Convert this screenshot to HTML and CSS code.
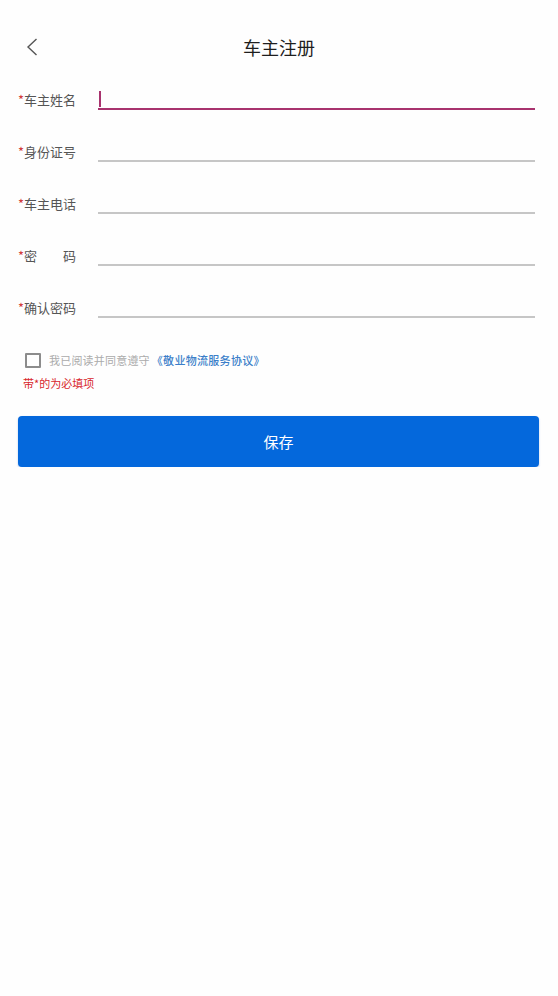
FILE: index.html
```html
<!DOCTYPE html>
<html lang="zh-CN">
<head>
<meta charset="utf-8">
<title>车主注册</title>
<link rel="stylesheet" href="styles.css">
</head>
<body>
<div class="header">
  <div class="back">
    <svg width="12" height="18" viewBox="0 0 12 18"><path d="M10.5 1 L2 9 L10.5 17" fill="none" stroke="#555" stroke-width="1.4"/></svg>
  </div>
  <div class="title">车主注册</div>
  <div></div>
</div>
<div class="form">
  <div class="row">
    <div class="label"><span class="star">*</span>车主姓名</div>
    <div class="field focus"><span class="caret"></span></div>
  </div>
  <div class="row">
    <div class="label"><span class="star">*</span>身份证号</div>
    <div class="field"></div>
  </div>
  <div class="row">
    <div class="label"><span class="star">*</span>车主电话</div>
    <div class="field"></div>
  </div>
  <div class="row">
    <div class="label"><span class="star">*</span>密&emsp;&emsp;码</div>
    <div class="field"></div>
  </div>
  <div class="row">
    <div class="label"><span class="star">*</span>确认密码</div>
    <div class="field"></div>
  </div>
</div>
<div class="agree">
  <span class="box"></span>
  <span class="agree-text">我已阅读并同意遵守</span><span class="link">《敬业物流服务协议》</span>
</div>
<div class="note">带*的为必填项</div>
<div class="btn">保存</div>
</body>
</html>
```
FILE: styles.css
```css
* { box-sizing: border-box; }
body {
  margin: 0;
  background: #fefefe;
  font-family: "Noto Sans CJK SC", "Noto Sans", sans-serif;
  color: #333;
}
.header {
  margin-top: 28px;
  height: 38px;
  display: grid;
  grid-template-columns: 1fr auto 1fr;
  align-items: center;
}
.back {
  padding-left: 26px;
  display: flex;
  align-items: center;
  height: 38px;
}
.title {
  font-size: 18px;
  color: #1e1e1e;
  font-weight: 400;
}
.form {
  padding: 24px 23px 0 18px;
  display: flex;
  flex-direction: column;
  gap: 32px;
}
.row {
  display: flex;
  align-items: center;
  height: 20px;
}
.label {
  width: 80px;
  font-size: 13px;
  line-height: 20px;
  color: #555;
  white-space: nowrap;
}
.star { color: #d23a3a; }
.field {
  flex: 1;
  height: 20px;
  border-bottom: 2px solid #c6c6c6;
  position: relative;
}
.field.focus { border-bottom-color: #a8336e; }
.caret {
  position: absolute;
  left: 1px;
  top: 1px;
  width: 2px;
  height: 16px;
  background: #a8336e;
}
.agree {
  margin-top: 35px;
  padding-left: 25px;
  display: flex;
  align-items: center;
  height: 14px;
  font-size: 11px;
}
.box {
  width: 16px;
  height: 15px;
  border: 2px solid #8c8c8c;
  border-radius: 1px;
  margin-right: 8px;
}
.agree-text { color: #ababab; letter-spacing: 0.2px; }
.link { color: #3b7ec9; font-weight: 500; letter-spacing: 0.3px; margin-left: 2px; }
.note {
  margin-top: 9px;
  padding-left: 23px;
  font-size: 11px;
  line-height: 14px;
  color: #d8262c;
}
.btn {
  margin: 26px 19px 0 18px;
  height: 51px;
  border-radius: 4px;
  background: #0468dc;
  color: #fff;
  font-size: 15px;
  display: flex;
  align-items: center;
  justify-content: center;
  box-shadow: 0 1px 2px rgba(0, 80, 200, 0.3);
}
```
